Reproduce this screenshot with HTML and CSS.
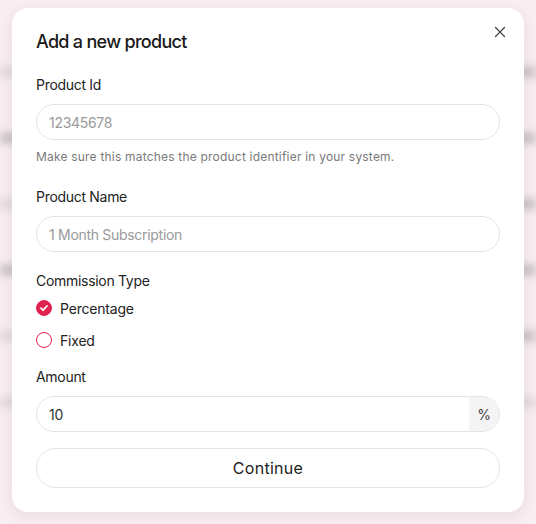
FILE: index.html
```html
<!DOCTYPE html>
<html>
<head>
<meta charset="utf-8">
<link rel="stylesheet" href="styles.css">
</head>
<body>
<div class="backdrop">
  <div class="bg-row"><span class="bar light"></span><span class="bar"></span></div>
  <div class="bg-row"><span class="bar"></span><span class="bar"></span></div>
  <div class="bg-row"><span class="bar light"></span><span class="bar"></span></div>
  <div class="bg-row"><span class="bar"></span><span class="bar"></span></div>
  <div class="bg-row"><span class="bar light"></span><span class="bar"></span></div>
  <div class="bg-row"><span class="bar light"></span><span class="bar light"></span></div>
</div>
<div class="overlay">
  <div class="modal">
    <div class="header">
      <h1 class="title">Add a new product</h1>
      <button class="close" aria-label="Close">
        <svg width="12" height="12" viewBox="0 0 12 12"><path d="M1.5 1.5L10.5 10.5M10.5 1.5L1.5 10.5" stroke="#444" stroke-width="1.2" stroke-linecap="round"/></svg>
      </button>
    </div>
    <div class="field f-id">
      <label class="label">Product Id</label>
      <div class="input"><span class="placeholder">12345678</span></div>
      <p class="help">Make sure this matches the product identifier in your system.</p>
    </div>
    <div class="field f-name">
      <label class="label">Product Name</label>
      <div class="input"><span class="placeholder">1 Month Subscription</span></div>
    </div>
    <div class="field f-type">
      <label class="label">Commission Type</label>
      <div class="radios">
        <div class="radio">
          <span class="dot checked">
            <svg width="10" height="10" viewBox="0 0 10 10"><path d="M2 5.2L4.1 7.2L8 3" stroke="#fff" stroke-width="1.8" fill="none" stroke-linecap="round" stroke-linejoin="round"/></svg>
          </span>
          <span class="radio-text">Percentage</span>
        </div>
        <div class="radio">
          <span class="dot"></span>
          <span class="radio-text">Fixed</span>
        </div>
      </div>
    </div>
    <div class="field f-amount">
      <label class="label">Amount</label>
      <div class="input group"><span class="value">10</span><span class="addon">%</span></div>
    </div>
    <button class="continue">Continue</button>
  </div>
</div>
</body>
</html>
```
FILE: styles.css
```css
* { box-sizing: border-box; }
html, body { margin: 0; padding: 0; }
body {
  width: 536px;
  height: 524px;
  overflow: hidden;
  background: #f8edf1;
  font-family: Inter, "Noto Sans", sans-serif;
  color: #1f1f1f;
  position: relative;
}
.backdrop {
  display: flex;
  flex-direction: column;
  gap: 58px;
  padding-top: 68px;
  filter: blur(5px);
}
.bg-row {
  display: flex;
  justify-content: space-between;
  height: 8px;
}
.bar {
  width: 40px;
  height: 8px;
  background: #b8b0b3;
}
.bar.light { background: #d9d0d4; }
.overlay {
  position: absolute;
  inset: 0;
  padding: 8px 12px 12px 12px;
}
.modal {
  background: #fff;
  border-radius: 16px;
  height: 504px;
  padding: 22px 24px 24px 24px;
  box-shadow: 0 4px 14px rgba(120, 80, 95, 0.10);
  display: flex;
  flex-direction: column;
}
.header {
  display: flex;
  justify-content: space-between;
  align-items: flex-start;
  margin-bottom: 21px;
  flex-shrink: 0;
}
.title {
  margin: 0;
  font-size: 18px;
  font-weight: 500;
  letter-spacing: -0.7px;
  line-height: 24px;
  color: #1a1a1a;
}
.close {
  border: 0;
  background: none;
  padding: 0;
  margin-top: -4px;
  margin-right: -6px;
  width: 12px;
  height: 12px;
  display: flex;
}
.field {
  display: flex;
  flex-direction: column;
  flex-shrink: 0;
}
.f-id { margin-bottom: 22px; }
.f-name { margin-bottom: 19px; }
.f-type { margin-bottom: 17px; }
.f-amount { margin-bottom: 16px; }
.label {
  font-size: 14px;
  line-height: 20px;
  letter-spacing: -0.3px;
  color: #222;
  margin-bottom: 9px;
}
.input {
  height: 36px;
  border: 1px solid #e4e4e4;
  border-radius: 18px;
  display: flex;
  align-items: center;
  padding-left: 12px;
  font-size: 14px;
  letter-spacing: -0.3px;
  flex-shrink: 0;
}
.placeholder { color: #9a9a9a; }
.help {
  margin: 9px 0 0 0;
  font-size: 12px;
  line-height: 16px;
  letter-spacing: 0.2px;
  color: #7a7a7a;
}
.radios {
  display: flex;
  flex-direction: column;
  gap: 12px;
  margin-top: -2px;
}
.radio {
  display: flex;
  align-items: center;
  gap: 8px;
  height: 20px;
}
.dot {
  width: 16px;
  height: 16px;
  border-radius: 50%;
  border: 1.3px solid #e0244f;
  display: flex;
  align-items: center;
  justify-content: center;
}
.dot.checked { background: #e0244f; }
.radio-text {
  font-size: 14px;
  letter-spacing: -0.2px;
  color: #222;
}
.group {
  padding-right: 0;
  overflow: hidden;
}
.value { flex: 1; color: #333; }
.addon {
  width: 30px;
  height: 100%;
  background: #f4f4f4;
  display: flex;
  align-items: center;
  justify-content: center;
  color: #444;
}
.continue {
  flex-shrink: 0;
  height: 40px;
  border: 1px solid #e4e4e4;
  border-radius: 20px;
  background: #fff;
  font-family: inherit;
  font-size: 16px;
  letter-spacing: 0.3px;
  color: #222;
  padding: 0;
}
```
